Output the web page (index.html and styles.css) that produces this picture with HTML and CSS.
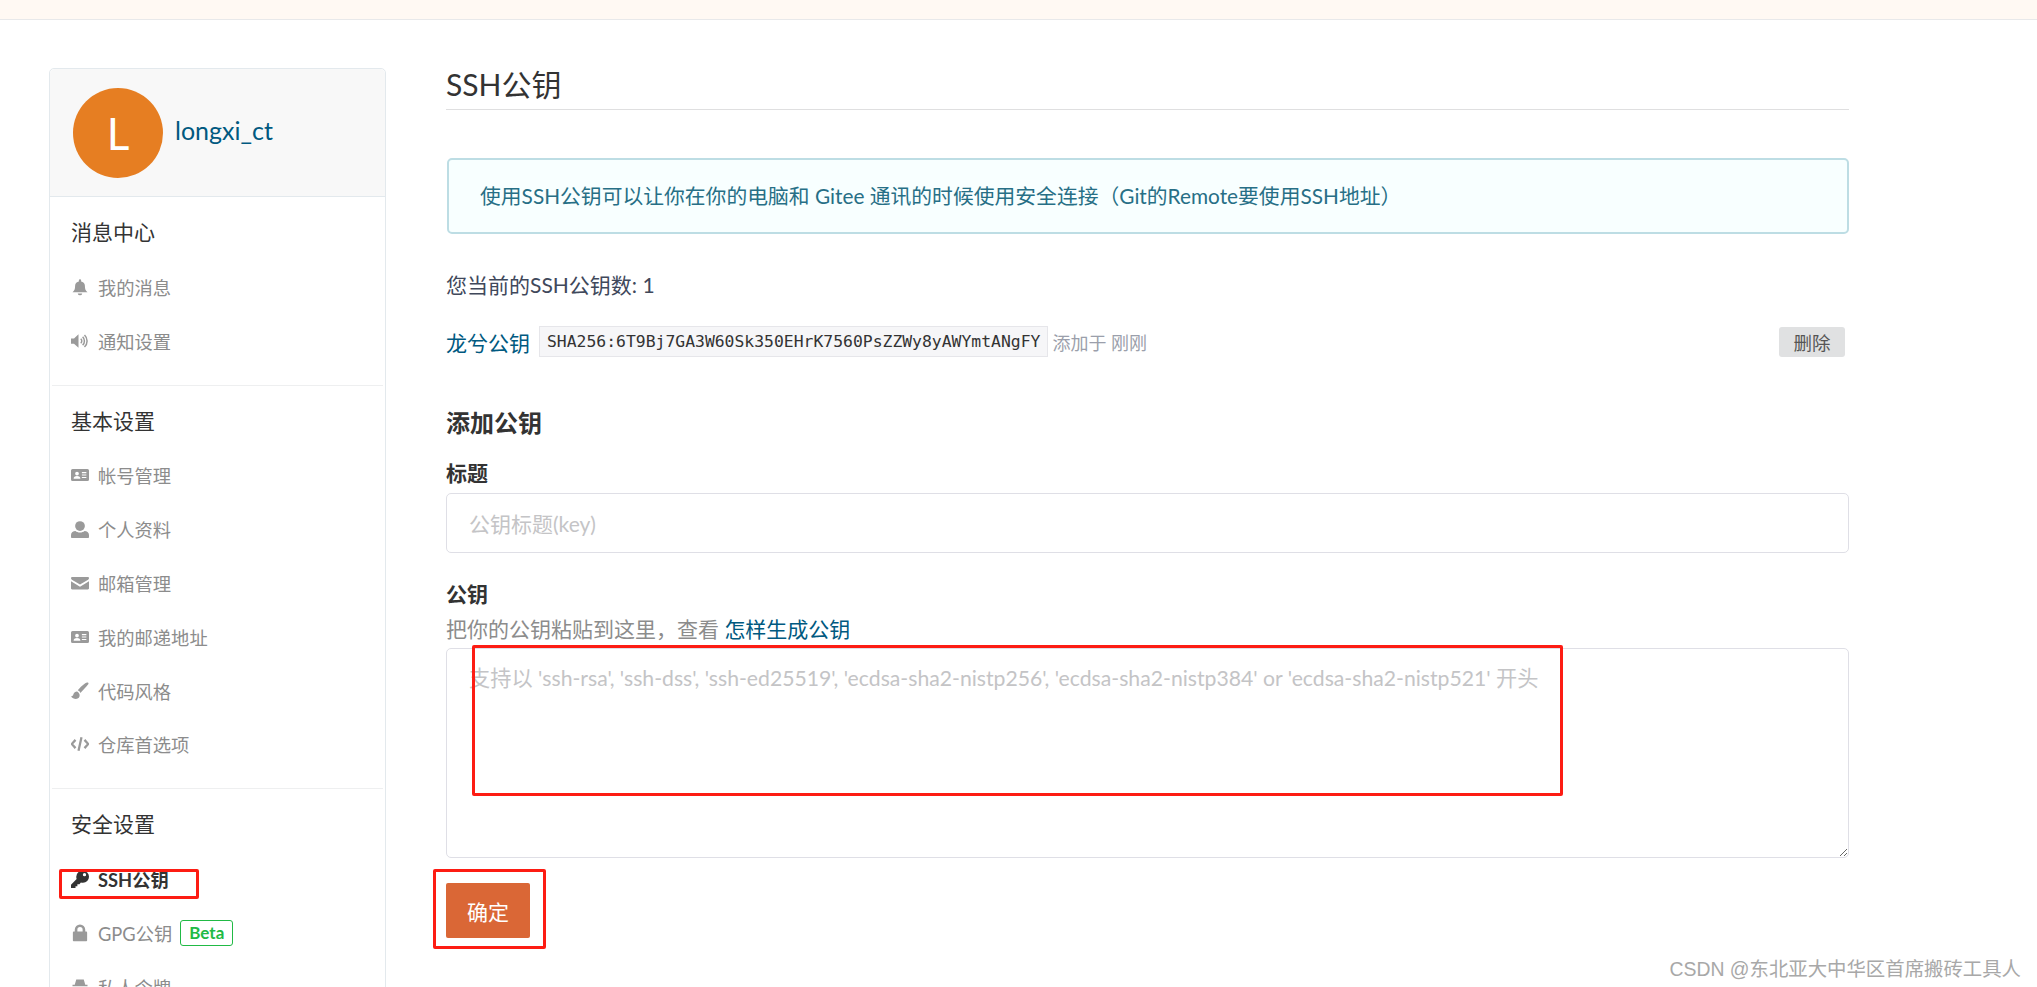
FILE: index.html
```html
<!DOCTYPE html>
<html lang="zh-CN">
<head>
    <meta charset="UTF-8">
    <meta name="viewport" content="width=device-width, initial-scale=1.0">
    <title>SSH公钥</title>
    <link rel="stylesheet" href="styles.css">
</head>
<body>
    <svg class="icon-defs" width="0" height="0">
        <symbol id="i-bell" viewBox="0 0 24 24"><path d="M12 23a3 3 0 0 0 3-2.500H9A3 3 0 0 0 12 23zM22 19c-2.500-2-3.500-4-3.500-9 0-3-2.500-5-5-5.500V3a1.500 1.500 0 0 0-3 0v1.500C8 5 5.500 7 5.500 10c0 5-1 7-3.500 9z"/></symbol>
        <symbol id="i-volume" viewBox="0 0 24 24"><path d="M0 8.500v7h4l6 5.500V3L4 8.500z"/><path class="wave" d="M13 9a4 4 0 0 1 0 6M15.500 6.500a7.500 7.500 0 0 1 0 11M18 4a11 11 0 0 1 0 16"/></symbol>
        <symbol id="i-card" viewBox="0 0 24 24"><path fill-rule="evenodd" d="M2 4h20a2 2 0 0 1 2 2v12a2 2 0 0 1-2 2H2a2 2 0 0 1-2-2V6a2 2 0 0 1 2-2zM8 7.500a2.500 2.500 0 1 0 0 5 2.500 2.500 0 0 0 0-5zM3.500 17h9c0-2.500-1.500-3.800-4.500-3.800S3.500 14.500 3.500 17zM14.500 8v1.500h6V8zM14.500 11.300v1.500h6v-1.500zM14.500 14.500V16h6v-1.500z"/></symbol>
        <symbol id="i-user" viewBox="0 0 24 24"><circle cx="12" cy="8" r="6.500"/><path d="M0 23v-3c0-3.500 3-5.500 6-5.500 1.500 1.300 3.500 2 6 2s4.500-.7 6-2c3 0 6 2 6 5.500v3c0 .6-.5 1-1 1H1c-.5 0-1-.4-1-1z"/></symbol>
        <symbol id="i-mail" viewBox="0 0 24 24"><path d="M0 5.500C0 4.500.8 4 1.500 4h21c.8 0 1.500.6 1.500 1.500 0 .8-.5 1.500-1.200 2L12 14 1.200 7.500C.5 7 0 6.400 0 5.500z"/><path d="M0 9.500l12 7.500 12-7.500V19c0 .8-.7 1.500-1.500 1.500h-21C.7 20.500 0 19.800 0 19z"/></symbol>
        <symbol id="i-brush" viewBox="0 0 24 24"><path d="M23 1c-1-.8-2.500-.5-4 .5C15 4.500 11 8 9 11c1.500.5 3 2 3.500 3.500C15.500 12 20 6.500 23 3c.5-.7.500-1.500 0-2z"/><path d="M7.500 12.500C4.500 13 3.500 15 3 17c-.3 1.300-1.500 2-3 2 1.500 2.500 4 3.500 6.500 3.500 3.500 0 5.500-2.500 5-5.500-.3-2-2-4.500-4-4.500z"/></symbol>
        <symbol id="i-code" viewBox="0 0 24 24"><path class="code" d="M6 6.500L1 12l5 5.500M18 6.500l5 5.500-5 5.500M14 3l-4 18"/></symbol>
        <symbol id="i-key" viewBox="0 0 24 24"><path fill-rule="evenodd" d="M16 1a8 8 0 0 1 0 16c-1 0-2-.2-2.800-.5l-2 2.500H8.500v2.500H6V24H0v-4.500l7.500-7.500c-.3-.8-.5-1.900-.5-3a8 8 0 0 1 9-8zM18 4a2.200 2.200 0 1 0 0 4.400A2.200 2.200 0 0 0 18 4z"/></symbol>
        <symbol id="i-lock" viewBox="0 0 24 24"><path fill-rule="evenodd" d="M5 10V7.500a7 7 0 0 1 14 0V10h1c1 0 1.500.7 1.500 1.500v10c0 1-.6 1.500-1.500 1.500H4c-1 0-1.500-.6-1.500-1.500v-10C2.500 10.700 3 10 4 10zM8.500 10h7V7.500a3.500 3.500 0 0 0-7 0z"/></symbol>
        <symbol id="i-secret" viewBox="0 0 24 24"><path d="M7 2h10l2 7h3v2H2V9h3zM7 13a3.500 3.500 0 0 1 3.500 3h3a3.500 3.500 0 1 1 0 1.500h-3A3.500 3.500 0 1 1 7 13z"/></symbol>
    </svg>

    <div class="notice-bar"></div>

    <div class="page">
        <aside class="sidebar">
            <div class="profile">
                <div class="avatar">L</div>
                <a class="profile-name">longxi_ct</a>
            </div>

            <div class="side-group">
                <div class="side-title">消息中心</div>
                <a class="side-item"><svg class="side-icon"><use href="#i-bell"/></svg>我的消息</a>
                <a class="side-item"><svg class="side-icon"><use href="#i-volume"/></svg>通知设置</a>
            </div>

            <div class="side-group">
                <div class="side-title">基本设置</div>
                <a class="side-item"><svg class="side-icon"><use href="#i-card"/></svg>帐号管理</a>
                <a class="side-item"><svg class="side-icon"><use href="#i-user"/></svg>个人资料</a>
                <a class="side-item"><svg class="side-icon"><use href="#i-mail"/></svg>邮箱管理</a>
                <a class="side-item"><svg class="side-icon"><use href="#i-card"/></svg>我的邮递地址</a>
                <a class="side-item"><svg class="side-icon"><use href="#i-brush"/></svg>代码风格</a>
                <a class="side-item"><svg class="side-icon"><use href="#i-code"/></svg>仓库首选项</a>
            </div>

            <div class="side-group">
                <div class="side-title">安全设置</div>
                <a class="side-item active"><svg class="side-icon"><use href="#i-key"/></svg>SSH公钥</a>
                <a class="side-item"><svg class="side-icon"><use href="#i-lock"/></svg>GPG公钥<span class="beta">Beta</span></a>
                <a class="side-item"><svg class="side-icon"><use href="#i-secret"/></svg>私人令牌</a>
            </div>
        </aside>

        <main class="content">
            <h2 class="page-title">SSH公钥</h2>

            <div class="info-box">使用SSH公钥可以让你在你的电脑和 Gitee 通讯的时候使用安全连接（Git的Remote要使用SSH地址）</div>

            <p class="key-count">您当前的SSH公钥数: 1</p>

            <div class="key-row">
                <a class="key-name">龙兮公钥</a>
                <code class="fingerprint">SHA256:6T9Bj7GA3W60Sk350EHrK7560PsZZWy8yAWYmtANgFY</code>
                <span class="key-time">添加于 刚刚</span>
                <button class="btn-delete">删除</button>
            </div>

            <h3 class="form-title">添加公钥</h3>

            <label class="field-label" for="title">标题</label>
            <input class="field-input" type="text" id="title" placeholder="公钥标题(key)">

            <label class="field-label key-label" for="pubkey">公钥</label>
            <p class="field-help">把你的公钥粘贴到这里，查看 <a>怎样生成公钥</a></p>
            <textarea class="field-text" id="pubkey" placeholder="支持以 'ssh-rsa', 'ssh-dss', 'ssh-ed25519', 'ecdsa-sha2-nistp256', 'ecdsa-sha2-nistp384' or 'ecdsa-sha2-nistp521' 开头"></textarea>

            <button class="btn-submit">确定</button>
        </main>
    </div>

    <!-- red marks drawn over the screenshot -->
    <div class="mark mark-side"></div>
    <div class="mark mark-text"></div>
    <div class="mark mark-btn"></div>

    <div class="watermark">CSDN @东北亚大中华区首席搬砖工具人</div>
</body>
</html>
```

FILE: styles.css
```css
html, body {
    height: 100%;
    overflow: hidden;
}

body {
    margin: 0;
    position: relative;
    background-color: #fff;
    color: #40485b;
    font-family: Lato, "Noto Sans CJK SC", sans-serif;
    font-size: 21px;
}

a {
    color: #005980;
}

.icon-defs {
    position: absolute;
}

.notice-bar {
    height: 19px;
    background-color: #fff9f3;
    border-bottom: 1px solid #e8e9ea;
}

.page {
    display: flex;
    align-items: flex-start;
    padding: 48px 0 0 49px;
}

/* sidebar */
.sidebar {
    width: 337px;
    flex-shrink: 0;
    box-sizing: border-box;
    border: 1px solid #e3e9ed;
    border-radius: 5px;
}

.profile {
    display: flex;
    align-items: center;
    gap: 12px;
    height: 127px;
    padding-left: 23px;
    background-color: #f8f8f8;
    border-bottom: 1px solid #e3e9ed;
    border-radius: 5px 5px 0 0;
}

.avatar {
    width: 90px;
    height: 90px;
    border-radius: 50%;
    background-color: #e67e22;
    color: #fff;
    font-size: 44px;
    line-height: 90px;
    text-align: center;
}

.profile-name {
    padding-bottom: 5px;
    font-size: 25px;
}

.side-group {
    padding: 19px 0 17px 19px;
    border-bottom: 1px solid #eeeff0;
    margin: 0 2px;
}

.side-group:first-of-type {
    padding-top: 25px;
    padding-bottom: 17px;
}

.side-title {
    height: 32px;
    margin-bottom: 12px;
    font-size: 21px;
    line-height: 32px;
    color: #333;
}

.side-item {
    display: flex;
    align-items: center;
    height: 53.8px;
    color: #8c8c8c;
    font-size: 18.3px;
}

.side-item.active {
    color: #333;
    font-weight: 700;
}

.side-icon {
    width: 18px;
    height: 18px;
    margin-right: 9px;
    fill: #9a9a9a;
    flex-shrink: 0;
}

.side-item.active .side-icon {
    fill: #333;
}

.wave {
    fill: none;
    stroke: #9a9a9a;
    stroke-width: 2;
}

.code {
    fill: none;
    stroke: #9a9a9a;
    stroke-width: 3;
}

.beta {
    margin-left: 8px;
    padding: 0 8px;
    height: 26px;
    line-height: 24px;
    box-sizing: border-box;
    border: 1px solid #21ba45;
    border-radius: 3px;
    color: #21ba45;
    font-size: 17px;
    font-weight: 700;
}

/* main column */
.content {
    width: 1403px;
    margin-left: 60px;
}

.page-title {
    margin: 0;
    height: 41px;
    font-size: 30px;
    font-weight: 400;
    line-height: 32px;
    color: #333;
    border-bottom: 1px solid #dfdfe0;
}

.info-box {
    margin: 48px 0 0 1px;
    padding: 0 31px;
    height: 72px;
    line-height: 72px;
    background-color: #f8ffff;
    border: 2px solid #bddde4;
    border-radius: 5px;
    color: #276f86;
    font-size: 20.8px;
}

.key-count {
    margin: 37px 0 0;
    line-height: 28px;
}

.key-row {
    display: flex;
    align-items: center;
    margin-top: 27px;
    height: 31px;
}

.key-name {
    font-size: 21px;
    margin-right: 9px;
}

.fingerprint {
    padding: 0 7px;
    height: 31px;
    line-height: 30px;
    box-sizing: border-box;
    background-color: #f6f6f8;
    border: 1px solid #e6e6ea;
    font-family: "DejaVu Sans Mono", "Liberation Mono", monospace;
    font-size: 16.4px;
    color: #333;
}

.key-time {
    margin-left: 4px;
    color: #9b9fab;
    font-size: 18px;
}

.btn-delete {
    margin-left: auto;
    margin-right: 4px;
    width: 66px;
    height: 30px;
    padding: 0;
    border: none;
    border-radius: 3px;
    background-color: #e0e1e2;
    color: #555;
    font-family: inherit;
    font-size: 18.5px;
}

.form-title {
    margin: 50px 0 0;
    line-height: 32px;
    font-size: 24px;
    font-weight: 700;
    color: #333;
}

.field-label {
    display: block;
    margin-top: 20px;
    line-height: 28px;
    font-weight: 700;
    color: #333;
}

.field-input {
    display: block;
    margin-top: 6px;
    width: 100%;
    height: 60px;
    box-sizing: border-box;
    padding: 0 22px;
    border: 1px solid #dfdfe6;
    border-radius: 5px;
    font-family: inherit;
    font-size: 21px;
}

.field-input::placeholder,
.field-text::placeholder {
    color: #c4c4c6;
    opacity: 1;
}

.key-label {
    margin-top: 27px;
}

.field-help {
    margin: 7px 0 0;
    line-height: 28px;
    color: #8c8c8c;
}

.field-text {
    display: block;
    margin-top: 5px;
    width: 100%;
    height: 210px;
    box-sizing: border-box;
    padding: 12px 22px;
    border: 1px solid #dfdfe6;
    border-radius: 5px;
    font-family: inherit;
    font-size: 21.2px;
}

.btn-submit {
    display: block;
    margin-top: 25px;
    width: 84px;
    height: 55px;
    padding: 0;
    border: none;
    border-radius: 2px;
    background-color: #da6736;
    color: #fff;
    font-family: inherit;
    font-size: 21px;
}

/* annotations and watermark sit on top of the page */
.mark {
    position: absolute;
    box-sizing: border-box;
    border: 3px solid #fd1c13;
    border-radius: 2px;
}

.mark-side {
    left: 59px;
    top: 869px;
    width: 140px;
    height: 30px;
}

.mark-text {
    left: 472px;
    top: 645px;
    width: 1091px;
    height: 151px;
}

.mark-btn {
    left: 433px;
    top: 869px;
    width: 113px;
    height: 80px;
}

.watermark {
    position: absolute;
    right: 16px;
    top: 957px;
    color: #a8a8a8;
    font-family: "Liberation Sans", "Noto Sans CJK SC", sans-serif;
    font-size: 19.4px;
    line-height: 24px;
}
```
